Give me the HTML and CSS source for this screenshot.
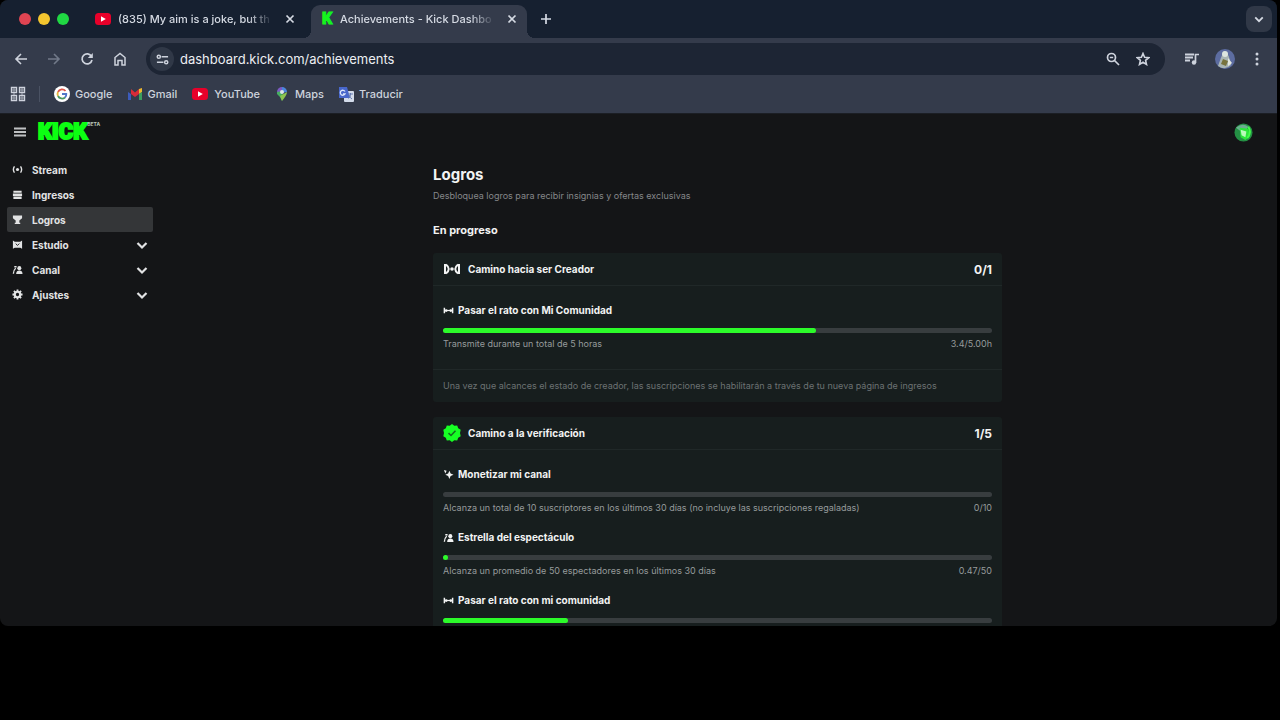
FILE: index.html
```html
<!DOCTYPE html>
<html lang="es">
<head>
<meta charset="utf-8">
<meta name="viewport" content="width=device-width, initial-scale=1">
<title>Achievements - Kick Dashboard</title>
<link rel="stylesheet" href="styles.css">
</head>
<body>
<svg class="defs" aria-hidden="true">
  <symbol id="close" viewBox="0 0 10 10"><path d="M1.5 1.5l7 7M8.500 1.500l-7 7" fill="none" stroke="currentColor" stroke-width="1.700"/></symbol>
  <symbol id="chevron" viewBox="0 0 12 12"><path d="M1.500 4l4.500 4.500L10.500 4" fill="none" stroke="currentColor" stroke-width="2.200"/></symbol>
  <symbol id="youtube" viewBox="0 0 18 14"><rect x="1" y="1" width="16" height="12" rx="3.500" fill="#e8002a"/><path d="M7 4.300v5.400L11.800 7z" fill="#fff"/></symbol>
  <symbol id="live" viewBox="0 0 12 12"><circle cx="6" cy="6" r="1.700" fill="currentColor"/><path d="M2.700 2.500Q.3 6 2.700 9.500M9.300 2.500Q11.700 6 9.300 9.500" fill="none" stroke="currentColor" stroke-width="1.500"/></symbol>
  <symbol id="path" viewBox="0 0 12 12"><path d="M1.500 3v6M10.500 3v6" fill="none" stroke="currentColor" stroke-width="1.600"/><path d="M2 6h8" stroke="currentColor" stroke-width="1.300"/><circle cx="3.500" cy="6" r="1.500" fill="currentColor"/><circle cx="8.500" cy="6" r="1.500" fill="currentColor"/></symbol>
  <symbol id="people" viewBox="0 0 12 12"><path d="M1.500 10.500C1.500 7.500 2.500 6 4 4.500M2.500 3h2.500" fill="none" stroke="currentColor" stroke-width="1.500"/><circle cx="8" cy="4.500" r="2.200" fill="currentColor"/><path d="M4.500 11c0-3 1.500-4 3.500-4s3.500 1 3.500 4z" fill="currentColor"/></symbol>
</svg>
<div class="window">
  <div class="tabstrip">
    <div class="lights"><i class="light red"></i><i class="light yellow"></i><i class="light green"></i></div>
    <div class="tab">
      <svg class="icon-yt" aria-hidden="true"><use href="#youtube"/></svg>
      <span class="tab-title">(835) My aim is a joke, but th</span>
      <button class="tab-close" aria-label="Cerrar pestaña"><svg aria-hidden="true"><use href="#close"/></svg></button>
    </div>
    <div class="tab active">
      <span class="favicon" aria-hidden="true">K</span>
      <span class="tab-title">Achievements - Kick Dashbo</span>
      <button class="tab-close" aria-label="Cerrar pestaña"><svg aria-hidden="true"><use href="#close"/></svg></button>
    </div>
    <button class="new-tab" aria-label="Nueva pestaña"><svg viewBox="0 0 12 12" aria-hidden="true"><path d="M6 1v10M1 6h10" stroke="currentColor" stroke-width="1.700"/></svg></button>
    <button class="tab-list" aria-label="Buscar pestañas"><svg aria-hidden="true"><use href="#chevron"/></svg></button>
  </div>

  <div class="toolbar">
    <button class="tool" aria-label="Atrás"><svg viewBox="0 0 14 14" aria-hidden="true"><path d="M13 7H2M7 2L2 7l5 5" fill="none" stroke="currentColor" stroke-width="1.600"/></svg></button>
    <button class="tool dim" aria-label="Adelante"><svg viewBox="0 0 14 14" aria-hidden="true"><path d="M1 7h11M7 2l5 5-5 5" fill="none" stroke="currentColor" stroke-width="1.600"/></svg></button>
    <button class="tool" aria-label="Recargar"><svg viewBox="0 0 14 14" aria-hidden="true"><path d="M11.500 4.500A5 5 0 1 0 12 8" fill="none" stroke="currentColor" stroke-width="1.700"/><path d="M12.800 1v5H7.800z" fill="currentColor"/></svg></button>
    <button class="tool" aria-label="Página principal"><svg viewBox="0 0 14 14" aria-hidden="true"><path d="M2 13V5.500l5-4 5 4V13H9V8.500H5V13z" fill="none" stroke="currentColor" stroke-width="1.500"/></svg></button>
    <div class="address">
      <button class="site-info" aria-label="Información del sitio"><svg viewBox="0 0 14 14" aria-hidden="true"><path d="M6 4h7M1 10h7" stroke="currentColor" stroke-width="1.800"/><circle cx="3" cy="4" r="1.700" fill="none" stroke="currentColor" stroke-width="1.600"/><circle cx="11" cy="10" r="1.700" fill="none" stroke="currentColor" stroke-width="1.600"/></svg></button>
      <input class="url" type="text" aria-label="Dirección" value="dashboard.kick.com/achievements">
      <button class="tool" aria-label="Zoom"><svg viewBox="0 0 14 14" aria-hidden="true"><circle cx="5.500" cy="5.500" r="4" fill="none" stroke="currentColor" stroke-width="1.700"/><path d="M8.500 8.500l4.500 4.500M3.800 5.500h3.400" stroke="currentColor" stroke-width="1.700"/></svg></button>
      <button class="tool" aria-label="Añadir a marcadores"><svg viewBox="0 0 14 14" aria-hidden="true"><path d="M7 1.500l1.600 3.800 4.100.4-3.100 2.700.9 4L7 10.200l-3.500 2.200.9-4L1.300 5.700l4.100-.4z" fill="none" stroke="currentColor" stroke-width="1.600"/></svg></button>
    </div>
    <button class="tool media" aria-label="Controles multimedia"><svg viewBox="0 0 16 14" aria-hidden="true"><path d="M1 2.500h9M1 5.500h8M1 8.500h5" stroke="currentColor" stroke-width="1.900"/><circle cx="10" cy="10.500" r="2.200" fill="currentColor"/><path d="M11.500 10.500V2.500H15" fill="none" stroke="currentColor" stroke-width="1.700"/></svg></button>
    <button class="tool profile" aria-label="Perfil"><svg viewBox="0 0 20 20" aria-hidden="true"><circle cx="10" cy="10" r="10" fill="#5c6ca0"/><path d="M3 17Q6 8 9 2q5 2 7 14-6 6-13 1z" fill="#a9b5b4"/><circle cx="10" cy="5" r="3" fill="#dce5df"/><path d="M8 10l5 2-2 5-5-2z" fill="#77733d"/><path d="M13 9l4 5-4 3z" fill="#e3e8df"/></svg></button>
    <button class="tool" aria-label="Menú"><svg viewBox="0 0 14 14" aria-hidden="true"><circle cx="7" cy="2" r="1.500" fill="currentColor"/><circle cx="7" cy="7" r="1.500" fill="currentColor"/><circle cx="7" cy="12" r="1.500" fill="currentColor"/></svg></button>
  </div>

  <nav class="bookmarks" aria-label="Marcadores">
    <button class="apps" aria-label="Aplicaciones"><svg viewBox="0 0 16 16" aria-hidden="true"><g fill="none" stroke="currentColor" stroke-width="1.400"><path d="M1.500 1.500h5v5h-5zM9.500 1.500h5v5h-5zM1.500 9.500h5v5h-5zM9.500 9.500h5v5h-5z"/></g><path d="M4 1v14M12 1v14M1 4h6M9 4h6M1 12h6M9 12h6" stroke="currentColor" stroke-width=".7"/></svg></button>
    <a href="#"><svg viewBox="0 0 16 16" aria-hidden="true"><circle cx="8" cy="8" r="8" fill="#fff"/><g fill="none" stroke-width="1.800"><path d="M11.500 5A4.500 4.500 0 0 0 4 6" stroke="#dd5548"/><path d="M4 6a4.500 4.500 0 0 0 0 4" stroke="#e5b53b"/><path d="M4 10a4.500 4.500 0 0 0 7 1.500" stroke="#4b9960"/><path d="M8 8h4.300a4.500 4.500 0 0 1-1.300 3.500" stroke="#5077c9"/></g></svg>Google</a>
    <a href="#"><svg viewBox="0 0 16 16" aria-hidden="true"><path d="M1 6l3 2v6H1z" fill="#3c5bbb"/><path d="M4 3l4 3.500L12 3v5l-4 3-4-3z" fill="#d82b38"/><path d="M12 3l3-1v4l-3 2z" fill="#edb72e"/><path d="M12 8l3-2v8h-3z" fill="#3c9e5e"/></svg>Gmail</a>
    <a href="#"><svg class="icon-yt" aria-hidden="true"><use href="#youtube"/></svg>YouTube</a>
    <a href="#"><svg viewBox="0 0 16 16" aria-hidden="true"><path d="M3 6a5 5 0 0 1 5-5v5z" fill="#7d5ac4"/><path d="M8 1a5 5 0 0 1 5 5L8 7z" fill="#4b86dd"/><path d="M3 6l5-1 1 6-1 4Q6 10 3 8z" fill="#45ae61"/><path d="M13 6q0 3-5 9l-2-5z" fill="#8ec550"/><circle cx="8" cy="6" r="2" fill="#dde6e9"/></svg>Maps</a>
    <a href="#"><svg viewBox="0 0 16 16" aria-hidden="true"><rect x="6" y="5" width="10" height="11" rx="1" fill="#d3dceb"/><path d="M1 1h8l3 11H1z" fill="#4867cb"/><path d="M7 5.500A2.500 2.500 0 1 0 7 8H5" fill="none" stroke="#dce6fa" stroke-width="1.300"/><path d="M10 8h5M12.500 7v1q0 3-2 4.500M11 9q1 3 3 4" fill="none" stroke="#647bb1"/></svg>Traducir</a>
  </nav>

  <div class="page">
    <header class="topbar">
      <button class="burger" aria-label="Menú"><svg viewBox="0 0 12 10" aria-hidden="true"><path d="M0 1.500h12M0 5h12M0 8.500h12" stroke="currentColor" stroke-width="1.800"/></svg></button>
      <a class="logo" href="#" aria-label="Kick beta">KICK<sup>BETA</sup></a>
      <button class="account" aria-label="Cuenta"><svg viewBox="0 0 20 20" aria-hidden="true"><circle cx="10" cy="10" r="9.500" fill="#249044"/><path d="M2 5q7-6 13-1l-2 3-7 1z" fill="#6bae90"/><path d="M6 5l9 1 2 8-5 4-5-3z" fill="#2ae63a"/><path d="M7 7l6 2-1 6-4-2z" fill="#b9fbbb"/><path d="M15 4q4 6-1 12" fill="none" stroke="#43ff48" stroke-width="2"/></svg></button>
    </header>
    <div class="layout">
      <nav class="sidebar" aria-label="Panel">
        <a href="#"><svg aria-hidden="true"><use href="#live"/></svg>Stream</a>
        <a href="#"><svg viewBox="0 0 12 12" aria-hidden="true"><path d="M1.500 2h9v2.200h-9zM1 5h10v2.500H1zM1.500 8.300h9v2.700h-9z" fill="currentColor"/></svg>Ingresos</a>
        <a href="#" class="current" aria-current="page"><svg viewBox="0 0 12 12" aria-hidden="true"><path d="M1 1.500h10v3L8 7v2.500h1V11H3V9.500h1V7L1 4.500z" fill="currentColor"/></svg>Logros</a>
        <button><svg viewBox="0 0 12 12" aria-hidden="true"><path d="M1 1.500l2 1.500h6l2-1.500v9L9 9.500H3l-2 1z" fill="currentColor"/><path d="M4 5l2 2 2-2" fill="none" stroke="#141517"/></svg>Estudio<svg class="chev" aria-hidden="true"><use href="#chevron"/></svg></button>
        <button><svg aria-hidden="true"><use href="#people"/></svg>Canal<svg class="chev" aria-hidden="true"><use href="#chevron"/></svg></button>
        <button><svg viewBox="0 0 12 12" aria-hidden="true"><circle cx="6" cy="6" r="3" fill="none" stroke="currentColor" stroke-width="2.400"/><path d="M6 .5v2M6 9.500v2M.5 6h2M9.500 6h2M2.100 2.100l1.500 1.500M8.400 8.400l1.500 1.500M9.900 2.100L8.400 3.600M3.600 8.400L2.100 9.900" stroke="currentColor" stroke-width="2"/></svg>Ajustes<svg class="chev" aria-hidden="true"><use href="#chevron"/></svg></button>
      </nav>
      <main class="main">
        <div class="content">
          <h1>Logros</h1>
          <p class="lead">Desbloquea logros para recibir insignias y ofertas exclusivas</p>
          <h2>En progreso</h2>

          <section class="card">
            <header class="card-head">
              <svg viewBox="0 0 18 18" aria-hidden="true"><circle cx="9" cy="9" r="1.800" fill="currentColor"/><path d="M2 4v10M16 4v10" stroke="currentColor" stroke-width="2"/><path d="M3 4.500Q8.500 9 3 13.500M15 4.500Q9.500 9 15 13.500" fill="none" stroke="currentColor" stroke-width="2"/></svg>
              <h3>Camino hacia ser Creador</h3><b class="count">0/1</b>
            </header>
            <div class="goals">
              <div class="goal">
                <h4><svg aria-hidden="true"><use href="#path"/></svg>Pasar el rato con Mi Comunidad</h4>
                <div class="bar"><span style="width:68%"></span></div>
                <p class="detail"><span>Transmite durante un total de 5 horas</span><span>3.4/5.00h</span></p>
              </div>
            </div>
            <p class="note">Una vez que alcances el estado de creador, las suscripciones se habilitarán a través de tu nueva página de ingresos</p>
          </section>

          <section class="card">
            <header class="card-head">
              <svg viewBox="0 0 18 18" aria-hidden="true"><path d="M9 0l2.300 1.800L14.200 1.500l1 2.800 2.500 1.500L17 9l.7 3.200-2.500 1.500-1 2.800-2.900-.3L9 18l-2.300-1.800-2.900.3-1-2.800L.3 12.200 1 9 .3 5.800l2.500-1.500 1-2.800 2.900.3z" fill="#16ff24"/><path d="M5.500 9.200l2.500 2.300 4.500-4.700" fill="none" stroke="#146b20" stroke-width="1.600"/></svg>
              <h3>Camino a la verificación</h3><b class="count">1/5</b>
            </header>
            <div class="goals">
              <div class="goal">
                <h4><svg viewBox="0 0 12 12" aria-hidden="true"><path d="M7 2l1.300 3 3.200 1.300-3.200 1.400L7 11 5.600 7.700 2.500 6.300 5.600 5zM1 1l3 .8L2.500 5z" fill="currentColor"/></svg>Monetizar mi canal</h4>
                <div class="bar"><span style="width:0%"></span></div>
                <p class="detail"><span>Alcanza un total de 10 suscriptores en los últimos 30 días (no incluye las suscripciones regaladas)</span><span>0/10</span></p>
              </div>
              <div class="goal">
                <h4><svg aria-hidden="true"><use href="#people"/></svg>Estrella del espectáculo</h4>
                <div class="bar"><span style="width:0.94%"></span></div>
                <p class="detail"><span>Alcanza un promedio de 50 espectadores en los últimos 30 días</span><span>0.47/50</span></p>
              </div>
              <div class="goal">
                <h4><svg aria-hidden="true"><use href="#path"/></svg>Pasar el rato con mi comunidad</h4>
                <div class="bar"><span style="width:22.7%"></span></div>
              </div>
            </div>
          </section>
        </div>
      </main>
    </div>
  </div>
</div>
</body>
</html>
```
FILE: styles.css
```css
* { box-sizing: border-box; }
html, body { height: 100%; }
body {
  margin: 0;
  background: #000;
  color: #f2f3f3;
  font-family: Inter, "Liberation Sans", sans-serif;
  overflow: hidden;
}
h1, h2, h3, h4, p { margin: 0; }
button { border: 0; padding: 0; background: none; color: inherit; font: inherit; }
a { color: inherit; text-decoration: none; }
svg { display: block; flex: none; }
.defs { position: absolute; width: 0; height: 0; }

.window {
  display: flex;
  flex-direction: column;
  height: 87vh;
  margin-right: 3px;
  border-radius: 8px;
  overflow: hidden;
  background: #141517;
}

/* Tab strip */
.tabstrip {
  display: flex;
  align-items: center;
  height: 38px;
  flex: none;
  padding: 0 5px 0 19px;
  background: #162030;
  color: #d5dae3;
}
.lights { display: flex; gap: 7px; width: 66px; }
.light { width: 12px; height: 12px; border-radius: 50%; }
.red { background: #e04452; }
.yellow { background: #f3c52f; }
.green { background: #20d843; }
.icon-yt { width: 18px; height: 14px; }
.tab {
  display: flex;
  align-items: center;
  gap: 6px;
  width: 226px;
  height: 33px;
  padding: 0 16px 5px 9px;
  align-self: flex-end;
  font-size: 11px;
  font-weight: 500;
}
.tab-title {
  flex: 1;
  min-width: 0;
  overflow: hidden;
  white-space: nowrap;
  -webkit-mask-image: linear-gradient(90deg, #000 84%, transparent);
  mask-image: linear-gradient(90deg, #000 84%, transparent);
}
.tab-close { margin-left: 6px; }
.tab-close svg { width: 10px; height: 10px; }
.tab.active {
  position: relative;
  width: 216px;
  padding-right: 10px;
  background: #343b4b;
  border-radius: 9px 9px 0 0;
}
.tab.active::before, .tab.active::after {
  content: "";
  position: absolute;
  bottom: 0;
  width: 8px;
  height: 8px;
}
.tab.active::before { left: -8px; background: radial-gradient(circle at 0 0, transparent 8px, #343b4b 8px); }
.tab.active::after { right: -8px; background: radial-gradient(circle at 100% 0, transparent 8px, #343b4b 8px); }
.favicon {
  width: 14px;
  color: #14f51e;
  font-family: Roboto, sans-serif;
  font-size: 16px;
  font-weight: 900;
  line-height: 16px;
  text-align: center;
  -webkit-text-stroke: 1px #14f51e;
}
.new-tab { margin-left: 13px; }
.new-tab svg { width: 12px; height: 12px; }
.tab-list {
  display: grid;
  place-items: center;
  width: 26px;
  height: 26px;
  margin-left: auto;
  border-radius: 8px;
  background: #303847;
}
.tab-list svg { width: 10px; height: 10px; }

/* Toolbar */
.toolbar {
  display: flex;
  align-items: center;
  flex: none;
  height: 42px;
  padding: 0 13px 0 14px;
  gap: 19px;
  background: #343b4b;
  color: #ced3dd;
}
.tool svg { width: 14px; height: 14px; }
.dim { color: #717989; }
.address {
  display: flex;
  align-items: center;
  gap: 16px;
  flex: 1;
  height: 32px;
  padding: 0 15px 0 4px;
  border-radius: 16px;
  background: #1d2534;
}
.site-info {
  display: grid;
  place-items: center;
  width: 24px;
  height: 24px;
  border-radius: 50%;
  background: #303847;
}
.site-info svg { width: 13px; height: 13px; }
.url {
  flex: 1;
  min-width: 0;
  margin-left: -10px;
  padding: 0;
  border: 0;
  outline: 0;
  background: none;
  color: #eceef2;
  font: 400 13px Inter, "Liberation Sans", sans-serif;
}
.media svg { width: 16px; }
.profile { margin: 0 -4px; }
.profile svg { width: 20px; height: 20px; }

/* Bookmarks */
.bookmarks {
  display: flex;
  align-items: center;
  flex: none;
  height: 33px;
  padding: 0 10px 6px;
  gap: 14px;
  background: #343b4b;
  color: #ced3dd;
  font-size: 11px;
  font-weight: 500;
}
.bookmarks a { display: flex; align-items: center; gap: 5px; }
.bookmarks a svg { width: 16px; height: 16px; }
.bookmarks a .icon-yt { width: 18px; height: 14px; }
.apps { padding-right: 13px; border-right: 1px solid #4a5263; }
.apps svg { width: 16px; height: 16px; }

/* Dashboard */
.page { flex: 1; min-height: 0; overflow: hidden; border-top: 1px solid #1b1e24; }
.topbar { display: flex; align-items: center; height: 36px; padding: 0 24px 0 14px; }
.burger svg { width: 12px; height: 10px; color: #bfc1c3; }
.logo {
  display: flex;
  align-items: flex-start;
  margin-left: 12px;
  color: #0cff12;
  font: 900 22px/22px Roboto, sans-serif;
  -webkit-text-stroke: 2px #0cff12;
}
.logo sup {
  color: #b9c8b9;
  font: 700 5px/6px Inter, sans-serif;
  -webkit-text-stroke: 0;
}
.account { margin-left: auto; }
.account svg { width: 19px; height: 19px; }
.layout { display: flex; align-items: flex-start; }
.sidebar { display: flex; flex-direction: column; width: 158px; padding: 7px 5px 0 7px; }
.sidebar a, .sidebar button {
  display: flex;
  align-items: center;
  gap: 9px;
  height: 25px;
  padding: 0 5px;
  color: #e2e3e4;
  font-size: 10px;
  font-weight: 700;
  text-align: left;
}
.sidebar svg { width: 11px; height: 11px; }
.sidebar .chev { width: 12px; height: 12px; margin-left: auto; }
.sidebar .current { background: #343638; border-radius: 2px; }

.main { flex: 1; min-width: 0; padding: 15px 0 0; }
.content { max-width: 569px; margin: 0 auto; }
h1 { font-size: 15px; line-height: 20px; }
.lead { margin-top: 4px; color: #85878a; font-size: 9px; line-height: 14px; }
h2 { margin-top: 19px; font-size: 11px; line-height: 16px; }
.card { margin-top: 15px; background: #171e1e; border-radius: 3px; }
.card-head {
  display: flex;
  align-items: center;
  gap: 7px;
  height: 33px;
  padding: 0 10px;
  border-bottom: 1px solid #202828;
}
.card-head svg { width: 18px; height: 18px; }
h3 { font-size: 10px; }
.count { margin-left: auto; font-size: 12px; }
.goals { display: grid; gap: 11px; padding: 14px 10px 17px; }
h4 { display: flex; align-items: center; gap: 4px; font-size: 10px; line-height: 20px; }
h4 svg { width: 11px; height: 11px; }
.bar { height: 5px; margin-top: 8px; border-radius: 3px; background: #383d3f; }
.bar span { display: block; height: 5px; border-radius: 3px; background: #2cfb2a; }
.detail {
  display: flex;
  justify-content: space-between;
  margin-top: 3px;
  color: #969b9c;
  font-size: 9px;
  line-height: 16px;
}
.note {
  padding: 8px 10px;
  border-top: 1px solid #202828;
  color: #6c7273;
  font-size: 9px;
  line-height: 16px;
}
```
